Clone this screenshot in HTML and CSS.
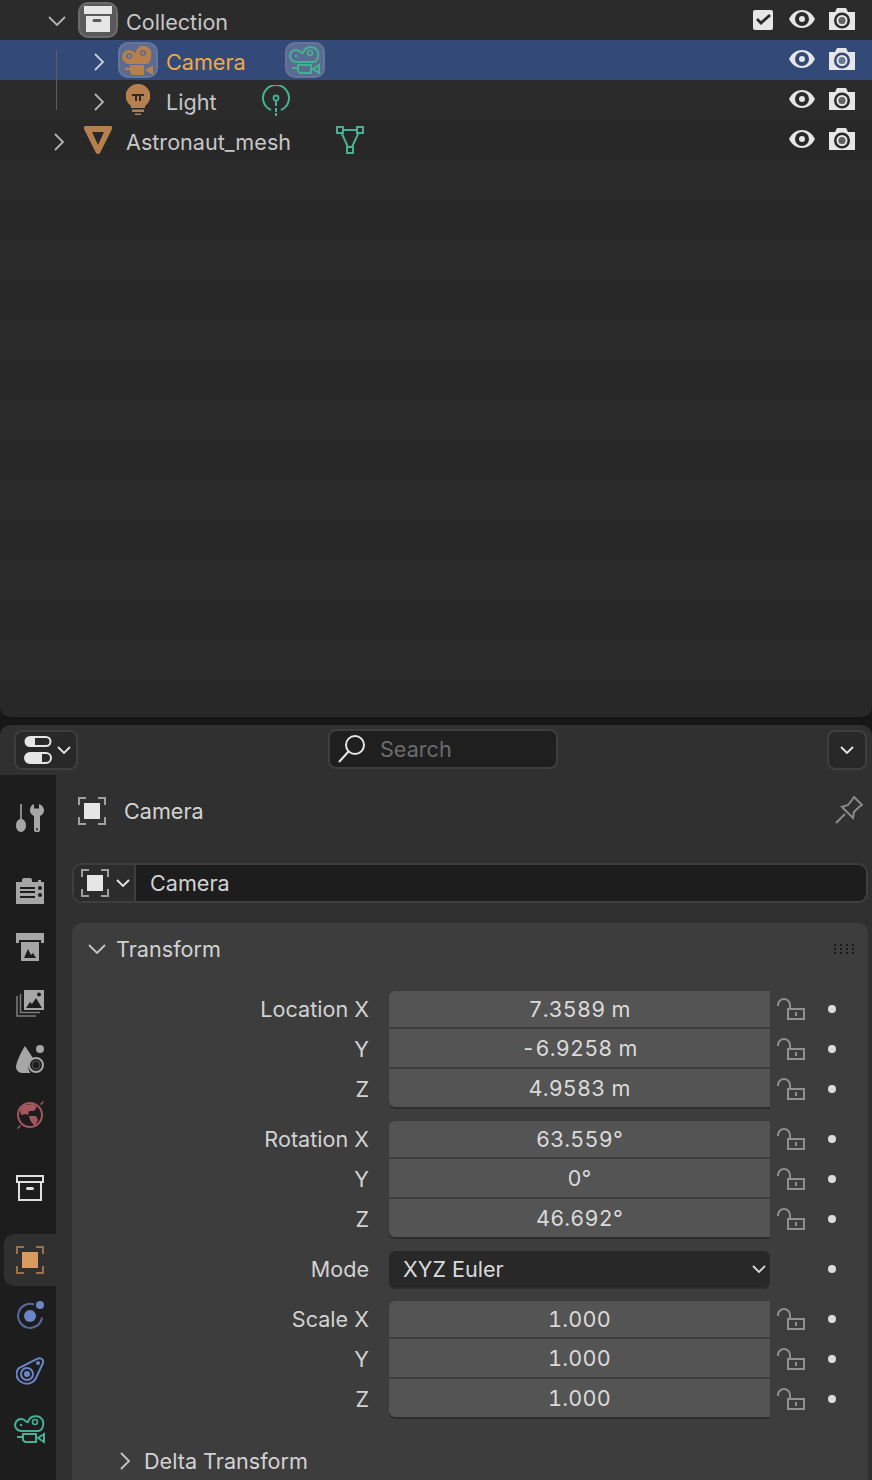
FILE: index.html
```html
<!DOCTYPE html>
<html lang="en">
<head>
<meta charset="utf-8">
<title>Outliner and Properties</title>
<link rel="stylesheet" href="styles.css">
</head>
<body>
<svg class="sprite" aria-hidden="true">
  <symbol id="chev-d" viewBox="0 0 20 20"><path d="M2 6l8 8 8-8" fill="none" stroke="currentColor" stroke-width="1.800"/></symbol>
  <symbol id="chev-r" viewBox="0 0 20 20"><path d="M6 2l8 8-8 8" fill="none" stroke="currentColor" stroke-width="1.800"/></symbol>
  <symbol id="chev-s" viewBox="0 0 14 14"><path d="M1 4l6 6 6-6" fill="none" stroke="currentColor" stroke-width="1.800"/></symbol>
  <symbol id="box" viewBox="0 0 28 28"><path fill-rule="evenodd" fill="currentColor" d="M0 0h28v8H0zM2 10h24v16H2zM10 13a1 1 0 0 0 0 3h6a1 1 0 0 0 0-3z"/></symbol>
  <symbol id="box-o" viewBox="0 0 28 26"><path fill="none" stroke="currentColor" stroke-width="2" d="M1 1h26v6H1zM3 7v18h22V7"/><rect x="10" y="12" width="8" height="3" rx="1.500" fill="currentColor"/></symbol>
  <symbol id="cam-solid" viewBox="0 0 32 32"><path fill="currentColor" fill-rule="evenodd" d="M7 20A7 7 0 1 1 12.500 8.500L13.500 9A8 8 0 0 1 29 7C30 12 29 20 24 20zM7 9a3 3 0 1 0 0 6 3 3 0 0 0 0-6zM21 6a3 3 0 1 0 0 6 3 3 0 0 0 0-6z"/><circle cx="7" cy="12" r="1.400" fill="currentColor"/><circle cx="21" cy="9" r="1.400" fill="currentColor"/><path fill="currentColor" d="M8 21h14v10H10l-2-3v-2H3v-2.500h5zM31 21v10l-8-5z"/></symbol>
  <symbol id="cam-line" viewBox="0 0 32 32"><path fill="none" stroke="currentColor" stroke-width="2" d="M7 18A6 6 0 1 1 12 8.500L14 9A8 8 0 0 1 29 8C30 13 28 18 24 18z"/><circle cx="21" cy="9" r="2.500" fill="none" stroke="currentColor" stroke-width="1.600"/><circle cx="7" cy="12" r="1.200" fill="currentColor"/><path fill="none" stroke="currentColor" stroke-width="2" d="M3 24h6M9 21h13v8H11l-2-2zM30 21l-6 4 6 4z"/></symbol>
  <symbol id="bulb" viewBox="0 0 24 32"><path fill="currentColor" fill-rule="evenodd" d="M12 0a12 12 0 0 1 7 22v2H5v-2A12 12 0 0 1 12 0zM6 10v2h3v5h2v-5h2v5h2v-5h3v-2z"/><path fill="currentColor" d="M6 25.500h12v2.500H6zM9 29.500h6V31H9z"/></symbol>
  <symbol id="light-data" viewBox="0 0 28 32"><path fill="none" stroke="currentColor" stroke-width="2" d="M9 25a13 13 0 1 1 10 0"/><circle cx="14" cy="13" r="2.500" fill="none" stroke="currentColor" stroke-width="1.800"/><path fill="none" stroke="currentColor" stroke-width="2" d="M14 16v5m0 2v4m0 1v3"/></symbol>
  <symbol id="tri-solid" viewBox="0 0 28 28"><path fill="currentColor" fill-rule="evenodd" d="M2 0h24a2 2 0 0 1 2 3L16 27a2.500 2.500 0 0 1-4 0L0 3a2 2 0 0 1 2-3zM8 6l6 13 6-13z"/></symbol>
  <symbol id="mesh-data" viewBox="0 0 28 28"><path fill="none" stroke="currentColor" stroke-width="2" d="M1 1h6v6H1zM21 1h6v6h-6zM11 21h6v6h-6zM7 4h14M5.500 7L12 21M22.500 7L16 21"/></symbol>
  <symbol id="check" viewBox="0 0 20 20"><path fill="currentColor" fill-rule="evenodd" d="M2 0h16a2 2 0 0 1 2 2v16a2 2 0 0 1-2 2H2a2 2 0 0 1-2-2V2a2 2 0 0 1 2-2zM16 4l-8 7-3-3-2 2 5 5 10-9z"/></symbol>
  <symbol id="eye" viewBox="0 0 26 18"><path fill="currentColor" fill-rule="evenodd" d="M13 0c5 0 10 3 13 9-3 6-8 9-13 9S3 15 0 9c3-6 8-9 13-9zM13 2a7 7 0 1 0 0 14 7 7 0 0 0 0-14zM13 6a3 3 0 1 1 0 6 3 3 0 0 1 0-6z"/></symbol>
  <symbol id="render" viewBox="0 0 26 22"><path fill="currentColor" fill-rule="evenodd" d="M8 0h9l2 4h7v18H0V4h6zM13 4.500a8 8 0 1 0 0 16 8 8 0 0 0 0-16zM13 7a5.500 5.500 0 1 1 0 11 5.500 5.500 0 0 1 0-11zM13 9a3.500 3.500 0 1 0 0 7 3.500 3.500 0 0 0 0-7z"/><circle cx="13" cy="12.500" r="3.500" fill="currentColor" fill-opacity=".3"/></symbol>
  <symbol id="toggle" viewBox="0 0 28 28"><path fill="currentColor" d="M6 0h16a5.500 5.500 0 0 1 0 11H6A5.500 5.500 0 0 1 6 0zM6 16h16a6 6 0 0 1 0 12H6a6 6 0 0 1 0-12z"/><path fill="#2a2a2a" d="M11 2h11a3.500 3.500 0 0 1 0 7H11zM18 18h4a4 4 0 0 1 0 8h-4z"/></symbol>
  <symbol id="search" viewBox="0 0 28 28"><circle cx="17" cy="10" r="9" fill="none" stroke="currentColor" stroke-width="2"/><path d="M10.500 16.500L1 27" fill="none" stroke="currentColor" stroke-width="2"/></symbol>
  <symbol id="object" viewBox="0 0 28 28"><rect x="6" y="6" width="16" height="16" fill="currentColor"/><path fill="none" stroke="currentColor" stroke-opacity=".62" stroke-width="2" d="M1 8V1h7M20 1h7v7M27 20v7h-7M8 27H1v-7"/></symbol>
  <symbol id="tools" viewBox="0 0 28 28"><path fill="currentColor" d="M4.200 0h1.600v15c2.500.5 4.200 3 4.200 6.500 0 3.500-2 6.500-5 6.500s-5-3-5-6.500c0-3.500 1.700-6 4.200-6.500z"/><path fill="currentColor" fill-rule="evenodd" d="M18 0v4.500h5V0c3 1 5 3.500 5 6.500 0 2.500-1.500 4.500-4 5.500V25.500a3 3 0 0 1-6 0V12c-2.500-1-4-3-4-5.500C14 3.500 15 1 18 0zM20.300 24v2.500h1.400V24z"/></symbol>
  <symbol id="render-tab" viewBox="0 0 28 26"><path fill="currentColor" fill-rule="evenodd" d="M8 0h6a2 2 0 0 1 2 2v2h6V2h3v2h3v22H0V4h6V2a2 2 0 0 1 2-2zM4 9v2h15V9zM4 13v2h15v-2zM4 18v2h15v-2zM24 8a2 2 0 1 0 0 4 2 2 0 0 0 0-4zM24 15a2 2 0 1 0 0 4 2 2 0 0 0 0-4z"/></symbol>
  <symbol id="output-tab" viewBox="0 0 28 28"><path fill="currentColor" fill-rule="evenodd" d="M0 0h28v10h-3V7H3v3H0zM5 9h18v19H5zM8 25h12l-3-5-2 2-3-6z"/></symbol>
  <symbol id="layers" viewBox="0 0 28 28"><path fill="none" stroke="currentColor" stroke-opacity=".7" stroke-width="1.500" d="M1 7v20h19M4.500 5v18.500H24"/><path fill="currentColor" fill-rule="evenodd" d="M8 1h20v20H8zM10 19h16L20 9l-4 6-2-2zM23 3.500a2 2 0 1 0 0 4 2 2 0 0 0 0-4z"/></symbol>
  <symbol id="scene" viewBox="0 0 28 28"><path fill="currentColor" d="M9 1l8 12a10 10 0 0 0-2.500 15H6a6 6 0 0 1-6-6c0-4 5-15 9-21z"/><circle cx="24" cy="4" r="4" fill="currentColor"/><circle cx="20" cy="20" r="7" fill="none" stroke="currentColor" stroke-width="2"/><circle cx="20" cy="20" r="4" fill="none" stroke="currentColor" stroke-opacity=".4"/></symbol>
  <symbol id="world" viewBox="0 0 28 28"><circle cx="14" cy="14" r="12" fill="none" stroke="currentColor" stroke-width="2"/><path fill="currentColor" d="M8 4l10-1 3 3-3 4h-5l-1 4-3-1-4 1-1-5zM13 15h7l2 4-3 6-3-3-2-3zM1 27l3-3 1 1-3 3zM24 3l3-3 1 1-3 3z"/></symbol>
  <symbol id="particles" viewBox="0 0 28 28"><path fill="none" stroke="currentColor" stroke-opacity=".75" stroke-width="2" d="M18 3.500a12 12 0 1 0 8 13"/><circle cx="14" cy="15" r="6" fill="currentColor"/><circle cx="24" cy="4" r="4" fill="currentColor"/></symbol>
  <symbol id="physics" viewBox="0 0 28 28"><path fill="none" stroke="currentColor" stroke-width="2" d="M21 2c3-2 7 0 6 4L20 21c-3 6-10 7-15 4S-1 15 3 11z"/><circle cx="11" cy="17" r="6" fill="none" stroke="currentColor" stroke-width="2"/><circle cx="11" cy="17" r="3" fill="currentColor"/><circle cx="22" cy="6" r="2" fill="currentColor"/></symbol>
  <symbol id="pin" viewBox="0 0 28 28"><path fill="none" stroke="currentColor" stroke-width="2" d="M19 1l8 8-3 2-5 5-1 6-11-11 6-2 4-5zM10 18L1 27"/></symbol>
  <symbol id="lock" viewBox="0 0 28 22"><path fill="none" stroke="currentColor" stroke-width="2" d="M1 8V7a6 6 0 0 1 12 0v4M11 11h16v10H11z"/><rect x="18" y="14" width="2" height="4" fill="currentColor"/></symbol>
  <symbol id="grip" viewBox="0 0 22 10"><path fill="currentColor" d="M0 0h2v2H0zM6 0h2v2H6zM12 0h2v2h-2zM18 0h2v2h-2zM0 4h2v2H0zM6 4h2v2H6zM12 4h2v2h-2zM18 4h2v2h-2zM0 8h2v2H0zM6 8h2v2H6zM12 8h2v2h-2zM18 8h2v2h-2z"/></symbol>
</svg>

<main class="app">
  <section class="outliner">
    <span class="tree-line"></span>
    <div class="row row-top">
      <svg class="chev-lg"><use href="#chev-d"/></svg>
      <span class="badge badge-coll"><svg class="ic-box"><use href="#box"/></svg></span>
      <span class="name">Collection</span>
      <span class="restrict">
        <svg class="ic-check"><use href="#check"/></svg>
        <svg class="ic-eye"><use href="#eye"/></svg>
        <svg class="ic-render"><use href="#render"/></svg>
      </span>
    </div>
    <div class="row row-child row-active">
      <svg class="chev-lg"><use href="#chev-r"/></svg>
      <span class="badge badge-sel"><svg class="ic-cam orange"><use href="#cam-solid"/></svg></span>
      <span class="name name-active">Camera</span>
      <span class="badge badge-sel badge-data"><svg class="ic-cam green"><use href="#cam-line"/></svg></span>
      <span class="restrict">
        <svg class="ic-eye"><use href="#eye"/></svg>
        <svg class="ic-render"><use href="#render"/></svg>
      </span>
    </div>
    <div class="row row-child">
      <svg class="chev-lg"><use href="#chev-r"/></svg>
      <span class="badge"><svg class="ic-bulb orange"><use href="#bulb"/></svg></span>
      <span class="name">Light</span>
      <span class="badge badge-data"><svg class="ic-ldata green"><use href="#light-data"/></svg></span>
      <span class="restrict">
        <svg class="ic-eye"><use href="#eye"/></svg>
        <svg class="ic-render"><use href="#render"/></svg>
      </span>
    </div>
    <div class="row row-root">
      <svg class="chev-lg"><use href="#chev-r"/></svg>
      <span class="badge"><svg class="ic-tri orange"><use href="#tri-solid"/></svg></span>
      <span class="name">Astronaut_mesh</span>
      <span class="badge badge-data"><svg class="ic-tri green"><use href="#mesh-data"/></svg></span>
      <span class="restrict">
        <svg class="ic-eye"><use href="#eye"/></svg>
        <svg class="ic-render"><use href="#render"/></svg>
      </span>
    </div>
  </section>

  <section class="props">
    <header class="props-head">
      <div class="pill pill-mode">
        <svg class="ic-toggle"><use href="#toggle"/></svg>
        <svg class="chev-sm"><use href="#chev-s"/></svg>
      </div>
      <div class="search">
        <svg class="ic-search"><use href="#search"/></svg>
        <span class="search-text">Search</span>
      </div>
      <div class="pill pill-menu"><svg class="chev-sm"><use href="#chev-s"/></svg></div>
    </header>

    <div class="props-body">
      <nav class="tabs">
        <div class="tab-group tab-group-first">
          <svg class="tab"><use href="#tools"/></svg>
        </div>
        <div class="tab-group tab-group-mid">
          <svg class="tab"><use href="#render-tab"/></svg>
          <svg class="tab"><use href="#output-tab"/></svg>
          <svg class="tab"><use href="#layers"/></svg>
          <svg class="tab"><use href="#scene"/></svg>
          <svg class="tab tab-world"><use href="#world"/></svg>
        </div>
        <div class="tab-group tab-group-coll">
          <svg class="tab tab-bright"><use href="#box-o"/></svg>
        </div>
        <div class="tab-group tab-group-obj">
          <span class="tab-active"><svg class="tab tab-orange"><use href="#object"/></svg></span>
          <svg class="tab tab-blue"><use href="#particles"/></svg>
          <svg class="tab tab-blue"><use href="#physics"/></svg>
          <svg class="tab tab-green"><use href="#cam-line"/></svg>
        </div>
      </nav>

      <div class="content">
        <div class="crumb">
          <svg class="ic-object"><use href="#object"/></svg>
          <span class="crumb-text">Camera</span>
          <svg class="ic-pin"><use href="#pin"/></svg>
        </div>

        <div class="idfield">
          <div class="id-type">
            <svg class="ic-object"><use href="#object"/></svg>
            <svg class="chev-sm"><use href="#chev-s"/></svg>
          </div>
          <div class="id-name">Camera</div>
        </div>

        <div class="panel">
          <div class="panel-head">
            <svg class="chev-md"><use href="#chev-d"/></svg>
            <span class="panel-title">Transform</span>
            <svg class="ic-grip"><use href="#grip"/></svg>
          </div>

          <div class="group">
            <div class="prop"><label>Location X</label><div class="num">7.3589 m</div><svg class="ic-lock"><use href="#lock"/></svg><i class="dot"></i></div>
            <div class="prop"><label>Y</label><div class="num">-6.9258 m</div><svg class="ic-lock"><use href="#lock"/></svg><i class="dot"></i></div>
            <div class="prop"><label>Z</label><div class="num num-last">4.9583 m</div><svg class="ic-lock"><use href="#lock"/></svg><i class="dot"></i></div>
          </div>
          <div class="group">
            <div class="prop"><label>Rotation X</label><div class="num">63.559°</div><svg class="ic-lock"><use href="#lock"/></svg><i class="dot"></i></div>
            <div class="prop"><label>Y</label><div class="num">0°</div><svg class="ic-lock"><use href="#lock"/></svg><i class="dot"></i></div>
            <div class="prop"><label>Z</label><div class="num num-last">46.692°</div><svg class="ic-lock"><use href="#lock"/></svg><i class="dot"></i></div>
          </div>
          <div class="group">
            <div class="prop"><label>Mode</label><div class="select"><span>XYZ Euler</span><svg class="chev-sm"><use href="#chev-s"/></svg></div><span class="lock-gap"></span><i class="dot"></i></div>
          </div>
          <div class="group">
            <div class="prop"><label>Scale X</label><div class="num">1.000</div><svg class="ic-lock"><use href="#lock"/></svg><i class="dot"></i></div>
            <div class="prop"><label>Y</label><div class="num">1.000</div><svg class="ic-lock"><use href="#lock"/></svg><i class="dot"></i></div>
            <div class="prop"><label>Z</label><div class="num num-last">1.000</div><svg class="ic-lock"><use href="#lock"/></svg><i class="dot"></i></div>
          </div>

          <div class="subpanel">
            <svg class="chev-md"><use href="#chev-r"/></svg>
            <span class="panel-title">Delta Transform</span>
          </div>
        </div>
      </div>
    </div>
  </section>
</main>
</body>
</html>
```
FILE: styles.css
```css
* { box-sizing: border-box; }
html, body { margin: 0; padding: 0; }
body {
  width: 872px;
  height: 1480px;
  overflow: hidden;
  background: #161616;
  font-family: Inter, "Liberation Sans", sans-serif;
  font-size: 21.6px;
  color: #c9c9c9;
}
.sprite { position: absolute; width: 0; height: 0; }
svg { display: block; flex: none; }
.app { display: flex; flex-direction: column; height: 1480px; }

/* Outliner */
.outliner {
  position: relative;
  height: 717px;
  flex: none;
  border-radius: 0 0 10px 10px;
  background: repeating-linear-gradient(#2b2b2b 0 40px, #282828 40px 80px);
}
.tree-line { position: absolute; left: 56px; top: 50px; width: 1px; height: 60px; background: #5c5c5c; z-index: 1; }
.row { display: flex; align-items: center; height: 40px; position: relative; }
.row-top { padding-left: 47px; background: #2b2b2b; }
.row-child { padding-left: 89px; background: #2b2b2b; }
.row-root { padding-left: 49px; background: #282828; }
.row-active { background: #334a78; }
.row .chev-lg { color: #b4b4b4; margin-right: 9px; margin-top: 3px; }
.row-top .chev-lg { margin-right: 11px; margin-top: 1px; }
.row-active .chev-lg { color: #c8cede; }
.chev-lg { width: 20px; height: 20px; }
.badge { width: 40px; height: 36px; display: flex; align-items: center; justify-content: center; border-radius: 10px; flex: none; }
.badge-coll { background: #5a5a5a; border: 2px solid #6c6c6c; color: #e6e6e6; }
.badge-sel { background: #5b6b92; border: 2px solid #66769b; }
.badge-data { margin-left: 39px; }
.name { margin-left: 8px; color: #c6c6c6; padding-top: 4px; }
.name-active { color: #f0a942; }
.orange { color: #b67f4e; }
.green { color: #45b191; }
.ic-box { width: 28px; height: 28px; }
.ic-cam { width: 32px; height: 32px; flex: none; }
.ic-bulb { width: 24px; height: 32px; }
.ic-ldata { width: 28px; height: 32px; margin-top: 2px; }
.ic-tri { width: 28px; height: 28px; }
.restrict { margin-left: auto; display: flex; align-items: center; padding-right: 17px; color: #e6e6e6; }
.ic-check { width: 20px; height: 20px; margin-right: 16px; }
.ic-eye { width: 26px; height: 18px; margin-right: 14px; margin-top: -3px; }
.ic-render { width: 26px; height: 22px; margin-top: -2px; }

/* Properties */
.props {
  margin-top: 8px;
  flex: 1;
  min-height: 0;
  background: #303030;
  border-radius: 10px 10px 0 0;
  display: flex;
  flex-direction: column;
  overflow: hidden;
}
.props-head { height: 50px; flex: none; position: relative; display: flex; align-items: flex-start; padding: 5px 5px 0 14px; }
.pill { height: 40px; border: 2px solid #3e3e3e; background: #282828; border-radius: 8px; display: flex; align-items: center; color: #e6e6e6; }
.pill-mode { width: 64px; padding-left: 8px; gap: 5px; }
.pill-menu { width: 40px; margin-left: auto; justify-content: center; }
.ic-toggle { width: 28px; height: 28px; }
.chev-sm { width: 14px; height: 14px; }
.search { position: absolute; left: 328px; top: 4px; width: 230px; height: 40px; border: 2px solid #3e3e3e; background: #1f1f1f; border-radius: 8px; display: flex; align-items: center; padding-left: 8px; color: #e6e6e6; }
.ic-search { width: 28px; height: 28px; }
.search-text { margin-left: 14px; color: #6c6c6c; }

.props-body { flex: 1; display: flex; min-height: 0; }
.tabs { width: 56px; flex: none; background: #1d1d1d; display: flex; flex-direction: column; color: #a6a6a6; }
.tab { width: 28px; height: 28px; margin-left: 16px; }
.tab-group { display: flex; flex-direction: column; gap: 28px; }
.tab-group-first { height: 72px; padding-top: 29px; }
.tab-group-mid { margin-top: 30px; height: 252px; }
.tab-group-coll { margin-top: 45px; }
.tab-group-obj { margin-top: 44px; }
.tab-bright { color: #e0e0e0; }
.tab-world { color: #a5575f; }
.tab-orange { color: #d99a5f; }
.tab-blue { color: #6a85c8; }
.tab-green { color: #45b191; width: 32px; height: 32px; margin-left: 14px; }
.tab-active { display: block; width: 52px; height: 52px; margin: -12px 0 -13px 4px; padding-top: 12px; background: #303030; border-radius: 10px 0 0 10px; }
.tab-active .tab { margin-left: 12px; }

.content { flex: 1; min-width: 0; padding: 0 4px 0 16px; }
.crumb { height: 72px; display: flex; align-items: center; color: #e6e6e6; padding-left: 6px; }
.ic-object { width: 28px; height: 28px; }
.crumb-text { margin-left: 18px; color: #d4d4d4; }
.ic-pin { width: 28px; height: 28px; margin-left: auto; color: #8a8a8a; margin-right: 5px; margin-top: -2px; }

.idfield { margin-top: 16px; height: 40px; display: flex; border: 2px solid #3e3e3e; border-radius: 10px; overflow: hidden; background: #1d1d1d; }
.id-type { width: 62px; flex: none; display: flex; align-items: center; padding-left: 7px; gap: 7px; background: #2c2c2c; border-right: 2px solid #3e3e3e; color: #e6e6e6; }
.id-name { flex: 1; padding-left: 14px; line-height: 36px; color: #d2d2d2; }

.panel { margin-top: 20px; height: 600px; background: #3d3d3d; border-radius: 10px 10px 0 0; }
.panel-head { height: 52px; display: flex; align-items: center; padding-left: 15px; }
.panel-head + .group { margin-top: 16px; }
.chev-md { width: 20px; height: 20px; color: #c6c6c6; }
.panel-title { margin-left: 9px; color: #d2d2d2; }
.ic-grip { width: 22px; height: 10px; margin-left: auto; margin-right: 12px; color: #1a1a1a; }

.group { margin-bottom: 10px; }
.prop { display: grid; grid-template-columns: 297px 401px 50px 16px; height: 40px; align-items: start; }
.prop label { text-align: right; line-height: 36px; color: #d2d2d2; }
.num { margin: -2px 0 0 20px; height: 38px; background: #545454; line-height: 38px; text-align: center; color: #dadada; width: 381px; font-variant-numeric: tabular-nums; letter-spacing: .2px; }
.prop:first-child .num { margin-top: 0; height: 36px; line-height: 36px; border-radius: 6px 0 0 0; }
.num-last { border-radius: 0 0 0 6px; box-shadow: 0 2px 0 #2d2d2d; }
.select { margin-left: 20px; width: 381px; height: 36px; background: #282828; border-radius: 6px; box-shadow: 0 2px 0 #2d2d2d; display: flex; align-items: center; justify-content: space-between; padding: 0 4px 0 14px; color: #dadada; }
.ic-lock { width: 28px; height: 22px; margin: 7px 0 0 7px; color: #909090; }
.lock-gap { display: block; }
.dot { display: block; width: 8px; height: 8px; border-radius: 50%; background: #dcdcdc; margin: 14px 0 0 8px; }

.subpanel { display: flex; align-items: center; height: 40px; padding-left: 43px; margin-top: 20px; }
.subpanel .panel-title { margin-left: 9px; }
```
